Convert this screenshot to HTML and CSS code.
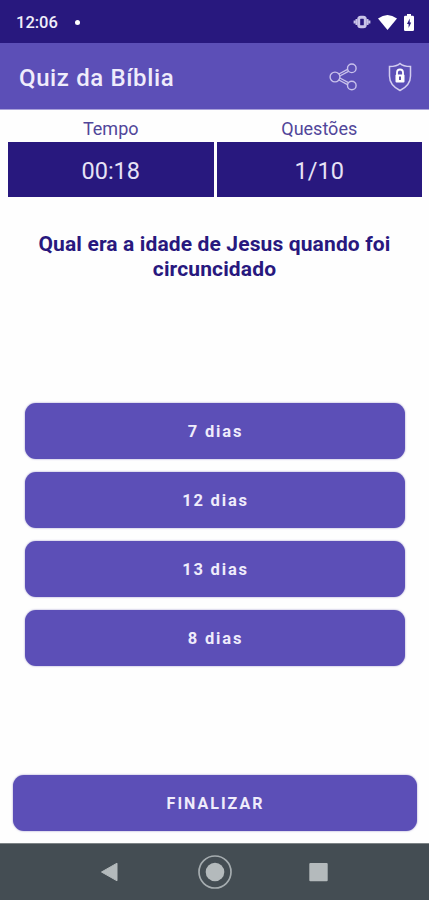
FILE: index.html
```html
<!DOCTYPE html>
<html lang="pt-BR">
<head>
    <meta charset="UTF-8">
    <meta name="viewport" content="width=device-width, initial-scale=1">
    <title>Quiz da Bíblia</title>
    <link rel="stylesheet" href="styles.css">
</head>
<body>
    <div class="status-bar">
        <span class="clock">12:06</span>
        <span class="dot"></span>
        <div class="status-icons">
            <svg width="18" height="14" viewBox="0 0 18 14">
                <path d="M1.500 5.500v3M3.400 4v6M14.600 4v6M16.500 5.500v3" stroke="#c9c4e8" stroke-width="1.800"/>
                <rect x="5.700" y="2.200" width="6.600" height="9.600" rx="2" fill="#28187e" stroke="#c9c4e8" stroke-width="3"/>
            </svg>
            <svg class="wifi" width="19" height="15" viewBox="0 0 19 15">
                <path d="M0 3.600Q9.500-3.400 19 3.600L9.500 15Z" fill="#fff"/>
            </svg>
            <svg class="battery" width="10" height="17" viewBox="0 0 10 17">
                <path d="M3 0h4v1.700h1.700q1.300 0 1.300 1.300v12.700q0 1.300-1.300 1.300H1.300Q0 17 0 15.700V3q0-1.300 1.300-1.300H3Z" fill="#fff"/>
                <path d="M5.700 4.500L3 10h1.600v4L7.200 8.500H5.700Z" fill="#28187e"/>
            </svg>
        </div>
    </div>

    <header class="app-bar">
        <h1>Quiz da Bíblia</h1>
        <svg class="share" width="30" height="30" viewBox="0 0 30 30" fill="none" stroke="#c8c1eb" stroke-width="1.4">
            <circle cx="6" cy="15" r="4.900"/>
            <circle cx="22.800" cy="6.300" r="4.300"/>
            <circle cx="22.800" cy="23.500" r="4.300"/>
            <path d="M9.900 12l8.600-4.600M10.800 14l8.700-4.600M9.900 18l8.600 4.600M10.800 16l8.700 4.600"/>
        </svg>
        <svg class="shield" width="24" height="30" viewBox="0 0 24 30">
            <path d="M12 1.500C9.500 3.800 5.500 4.500 1.500 4.500V14c0 7.500 4.500 11.500 10.500 14.500C18 25.500 22.500 21.500 22.500 14V4.500C18.500 4.500 14.500 3.800 12 1.500Z" fill="none" stroke="#d3cdf0" stroke-width="1.500"/>
            <path d="M9 13v-2.500a3 3 0 0 1 6 0V13" fill="none" stroke="#fff" stroke-width="1.800"/>
            <rect x="7.500" y="12.500" width="9" height="8" rx="1" fill="#fff"/>
            <path d="M12 14.500v3.500" stroke="#4a3c9d" stroke-width="1.800"/>
        </svg>
    </header>

    <main class="quiz">
        <div class="stats">
            <div class="stat">
                <span class="label">Tempo</span>
                <div class="value">00:18</div>
            </div>
            <div class="stat">
                <span class="label">Questões</span>
                <div class="value">1/10</div>
            </div>
        </div>

        <h2 class="question">Qual era a idade de Jesus quando foi circuncidado</h2>

        <div class="answers">
            <button class="btn">7 dias</button>
            <button class="btn">12 dias</button>
            <button class="btn">13 dias</button>
            <button class="btn">8 dias</button>
        </div>

        <button class="btn finish">FINALIZAR</button>
    </main>

    <nav class="nav-bar">
        <svg width="36" height="36" viewBox="0 0 36 36">
            <path d="M8.500 18L24 9.200v17.600Z" fill="#b4babc" stroke="#b4babc" stroke-linejoin="round"/>
        </svg>
        <svg width="36" height="36" viewBox="0 0 36 36">
            <circle cx="18" cy="18" r="16" fill="none" stroke="#a5acaf" stroke-width="1.700"/>
            <circle cx="18" cy="18" r="9.300" fill="#b4babc"/>
        </svg>
        <svg width="36" height="36" viewBox="0 0 36 36">
            <rect x="8.300" y="9" width="18.400" height="18.300" rx="1" fill="#b4babc"/>
        </svg>
    </nav>
</body>
</html>
```

FILE: styles.css
```css
* { margin: 0; padding: 0; box-sizing: border-box; }

body {
    display: flex;
    flex-direction: column;
    height: 100vh;
    background: #fefefe;
    font-family: Roboto, Arial, sans-serif;
    overflow: hidden;
}

svg {
    display: block;
    flex: none;
}

/* status bar */
.status-bar {
    display: flex;
    align-items: center;
    height: 43px;
    padding: 1px 15px 0 16px;
    background: #28187e;
    color: #f0eefa;
}

.clock {
    font-size: 16.5px;
    font-weight: 500;
}

.dot {
    width: 5px;
    height: 5px;
    margin-left: 17px;
    border-radius: 50%;
    background: #fff;
}

.status-icons {
    display: flex;
    align-items: center;
    margin-left: auto;
}

.wifi { margin-left: 7px; }
.battery { margin-left: 7px; }

/* app bar */
.app-bar {
    display: flex;
    align-items: center;
    height: 67px;
    padding: 1px 17px 0 19px;
    background: #5c4fb7;
    border-bottom: 1px solid #a9a1d9;
}

.app-bar h1 {
    flex: 1;
    padding-top: 2px;
    color: #efecfb;
    font-size: 24px;
    font-weight: 500;
    letter-spacing: 0.62px;
}

.share { margin-right: 29px; }

/* quiz */
.quiz {
    flex: 1;
    display: flex;
    flex-direction: column;
}

.stats {
    display: grid;
    grid-template-columns: 1fr 1fr;
    gap: 3px;
    padding: 0 7px 0 8px;
}

.stat { text-align: center; }

.label {
    display: block;
    height: 32px;
    padding-top: 3px;
    color: #51469a;
    font-size: 18px;
    line-height: 32px;
}

.value {
    height: 55px;
    background: #28187e;
    color: #e6e2f6;
    font-size: 23.5px;
    line-height: 58px;
}

.question {
    height: 206px;
    padding: 35px 30px 0;
    color: #28187e;
    font-size: 21px;
    font-weight: 700;
    line-height: 25px;
    letter-spacing: 0.13px;
    text-align: center;
}

.answers {
    display: flex;
    flex-direction: column;
    gap: 13px;
    padding: 0 24px 0 25px;
}

.btn {
    height: 56px;
    padding: 1px 0 0 1px;
    border: none;
    border-radius: 11px;
    background: #5c4fb7;
    box-shadow: 0 0 2px rgba(72, 60, 160, 0.6);
    color: #efecfb;
    font-family: inherit;
    font-size: 16.5px;
    font-weight: 700;
    letter-spacing: 1.8px;
}

.finish {
    margin: auto 12px 12px 13px;
    font-size: 16px;
    letter-spacing: 2px;
}

/* navigation bar */
.nav-bar {
    display: flex;
    align-items: center;
    justify-content: center;
    gap: 68px;
    height: 57px;
    background: #444d53;
    border-top: 1px solid #7d8386;
}
```
